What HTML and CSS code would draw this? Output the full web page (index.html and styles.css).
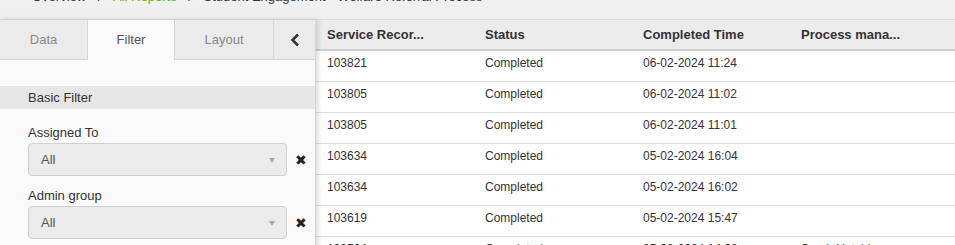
FILE: index.html
```html
<!DOCTYPE html>
<html lang="en">

<head>
    <meta charset="UTF-8">
    <title>Reports</title>
    <link rel="stylesheet" href="styles.css">
</head>

<body>
    <div class="breadcrumb">
        <span class="crumb">Overview</span>
        <span class="sep">/</span>
        <span class="crumb green">All Reports</span>
        <span class="sep">/</span>
        <span class="crumb">Student Engagement - Welfare Referral Process</span>
    </div>
    <div class="main">
        <div class="panel">
            <div class="tabs">
                <div class="tab">Data</div>
                <div class="tab active">Filter</div>
                <div class="tab layout">Layout</div>
                <div class="collapse">
                    <svg width="10" height="14" viewBox="0 0 10 14">
                        <path d="M8 1.5 L2.5 7 L8 12.5" fill="none" stroke="#333" stroke-width="2.6" />
                    </svg>
                </div>
            </div>
            <div class="section">Basic Filter</div>
            <div class="field">
                <label>Assigned To</label>
                <div class="field-row">
                    <div class="select">All<span class="caret"></span></div>
                    <span class="clear">&#10006;</span>
                </div>
            </div>
            <div class="field">
                <label>Admin group</label>
                <div class="field-row">
                    <div class="select">All<span class="caret"></span></div>
                    <span class="clear">&#10006;</span>
                </div>
            </div>
        </div>
        <div class="grid">
            <table>
                <thead>
                    <tr>
                        <th>Service Recor...</th>
                        <th>Status</th>
                        <th>Completed Time</th>
                        <th>Process mana...</th>
                    </tr>
                </thead>
                <tbody>
                    <tr><td>103821</td><td>Completed</td><td>06-02-2024 11:24</td><td></td></tr>
                    <tr><td>103805</td><td>Completed</td><td>06-02-2024 11:02</td><td></td></tr>
                    <tr><td>103805</td><td>Completed</td><td>06-02-2024 11:01</td><td></td></tr>
                    <tr><td>103634</td><td>Completed</td><td>05-02-2024 16:04</td><td></td></tr>
                    <tr><td>103634</td><td>Completed</td><td>05-02-2024 16:02</td><td></td></tr>
                    <tr><td>103619</td><td>Completed</td><td>05-02-2024 15:47</td><td></td></tr>
                    <tr><td>103594</td><td>Completed</td><td>05-02-2024 14:08</td><td>Sarah Hutchinson</td></tr>
                </tbody>
            </table>
        </div>
    </div>
</body>

</html>
```

FILE: styles.css
```css
body {
    margin: 0;
    background-color: #f0f0f0;
    font-family: "Liberation Sans", Arial, sans-serif;
    color: #333;
    overflow: hidden;
}

.breadcrumb {
    height: 19px;
    overflow: hidden;
    padding-left: 32px;
    font-size: 13px;
    line-height: 13px;
    white-space: nowrap;
}

.breadcrumb .crumb,
.breadcrumb .sep {
    display: inline-block;
    margin-top: -10px;
    vertical-align: top;
}

.breadcrumb .sep {
    margin-left: 8px;
    margin-right: 8px;
}

.green {
    color: #5cb800;
}

.main {
    display: flex;
    border-top: 1px solid #dcdcdc;
}

.panel {
    width: 315px;
    flex-shrink: 0;
    height: 230px;
    background-color: #fafafa;
    border-right: 1px solid #d6d6d6;
    box-shadow: 2px 0 5px rgba(0, 0, 0, 0.15);
    position: relative;
    z-index: 1;
}

.tabs {
    display: flex;
    height: 40px;
}

.tab {
    width: 87px;
    height: 39px;
    line-height: 39px;
    text-align: center;
    font-size: 13px;
    color: #888;
    background-color: #ebebeb;
    border-bottom: 1px solid #d6d6d6;
}

.tab.active {
    width: 86px;
    height: 40px;
    color: #555;
    background-color: #fafafa;
    border-bottom: none;
    border-left: 1px solid #d6d6d6;
    border-right: 1px solid #d6d6d6;
}

.tab.layout {
    width: 98px;
    border-right: 1px solid #d6d6d6;
}

.collapse {
    flex: 1;
    height: 39px;
    display: flex;
    align-items: center;
    justify-content: center;
    background-color: #ebebeb;
    border-bottom: 1px solid #d6d6d6;
}

.section {
    margin-top: 26px;
    height: 23px;
    line-height: 23px;
    padding-left: 28px;
    font-size: 13px;
    background-color: #e6e6e6;
}

.field {
    padding-left: 28px;
    margin-top: 16px;
}

.field + .field {
    margin-top: 12px;
}

.field label {
    display: block;
    height: 18px;
    line-height: 16px;
    font-size: 13px;
}

.field-row {
    display: flex;
    align-items: center;
}

.select {
    position: relative;
    width: 245px;
    height: 31px;
    line-height: 31px;
    padding-left: 12px;
    font-size: 13px;
    color: #555;
    background-color: #ebebeb;
    border: 1px solid #d0d0d0;
    border-radius: 4px;
}

.caret {
    position: absolute;
    right: 11px;
    top: 14px;
    border-left: 3.5px solid transparent;
    border-right: 3.5px solid transparent;
    border-top: 5px solid #a8a8a8;
}

.clear {
    margin-left: 8px;
    font-size: 14px;
    color: #222;
}

.grid {
    flex: 1;
}

table {
    width: 100%;
    border-collapse: collapse;
    table-layout: fixed;
    font-size: 12px;
}

th {
    height: 29px;
    text-align: left;
    padding: 0 0 0 11px;
    font-size: 13px;
    font-weight: bold;
    color: #333;
    background-color: #ececec;
    border-bottom: 2px solid #cfcfcf;
}

th:nth-child(1),
th:nth-child(2),
th:nth-child(3) {
    width: 147px;
}

td {
    height: 30px;
    padding: 0 0 0 11px;
    background-color: #fff;
    border-bottom: 1px solid #dedede;
    white-space: nowrap;
    vertical-align: top;
    line-height: 24px;
}
```
